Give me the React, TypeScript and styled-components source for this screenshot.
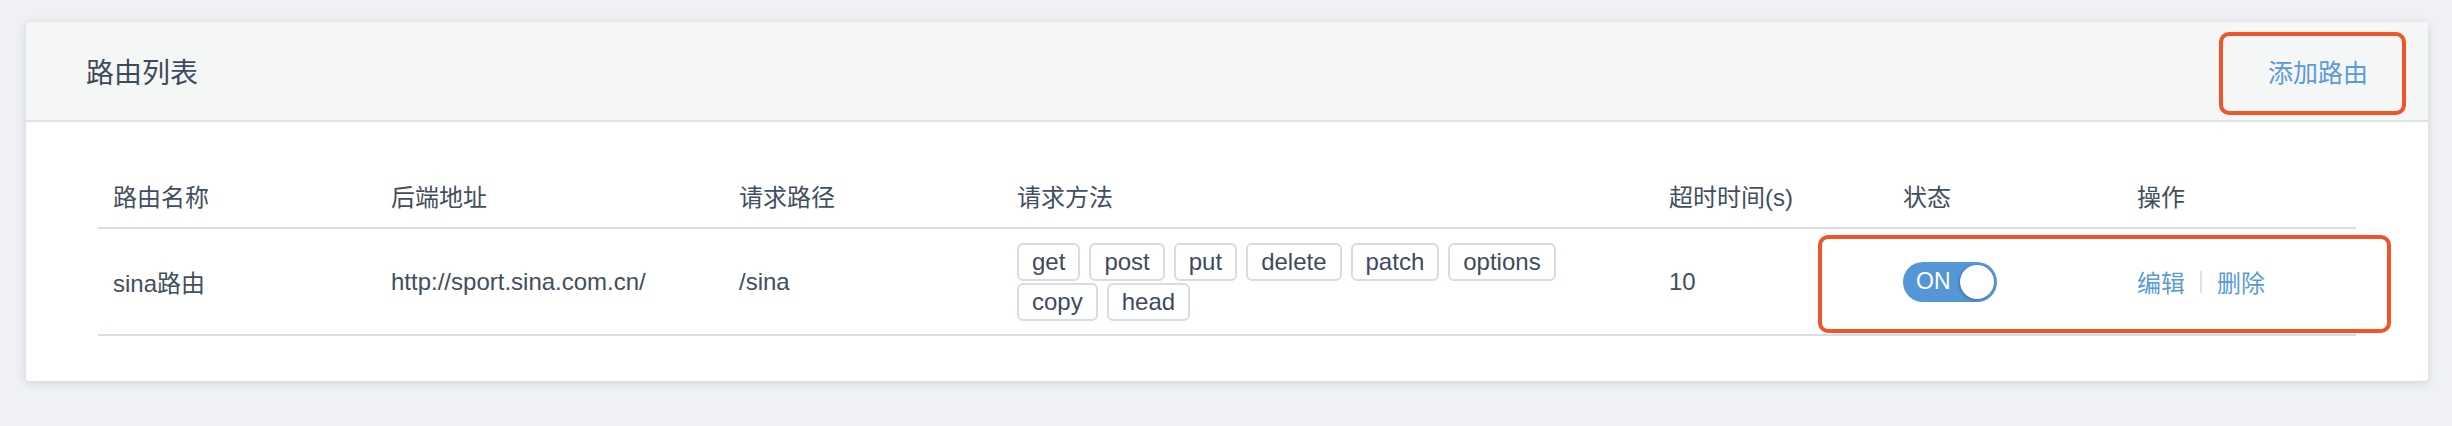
import React from 'react';
import styled, { createGlobalStyle } from 'styled-components';

const GlobalStyle = createGlobalStyle`
  html, body {
    margin: 0;
    padding: 0;
    background: #eff1f4;
  }
  body {
    font-family: "Liberation Sans", "Noto Sans CJK SC", sans-serif;
    color: #424e60;
  }
`;

const Page = styled.div`
  padding: 22px 24px 44px 26px;
`;

const Card = styled.section`
  position: relative;
  background: #fff;
  border-radius: 4px;
  box-shadow: 0 2px 10px rgba(40, 52, 72, 0.16);
`;

const CardHeader = styled.header`
  display: flex;
  align-items: center;
  justify-content: space-between;
  height: 100px;
  padding: 0 60px;
  box-sizing: border-box;
  background: #f5f7f7;
  border-bottom: 2px solid #dfe3e8;
  border-radius: 4px 4px 0 0;
`;

const Title = styled.h2`
  margin: 0;
  font-size: 28px;
  font-weight: 400;
  color: #3f4a5c;
`;

const LinkButton = styled.a`
  font-size: 25px;
  color: #5b9bd5;
  cursor: pointer;
  text-decoration: none;
`;

const CardBody = styled.div`
  padding: 41px 72px 45px;
`;

const Row = styled.div<{ $head?: boolean }>`
  display: grid;
  grid-template-columns: 278px 348px 278px 652px 234px 234px 1fr;
  align-items: center;
  min-height: ${({ $head }) => ($head ? '64px' : '105px')};
  border-bottom: 2px solid #d9dde6;
  font-size: 24px;
  color: #424e60;
`;

const Cell = styled.div`
  padding: 0 15px;
`;

const Tags = styled.div`
  display: flex;
  flex-wrap: wrap;
  gap: 2px 9px;
  max-width: 580px;
`;

const Tag = styled.span`
  display: inline-block;
  height: 38px;
  line-height: 34px;
  padding: 0 13px;
  box-sizing: border-box;
  border: 2px solid #d6dbe5;
  border-radius: 6px;
  font-size: 24px;
  color: #3f4a5c;
`;

const Switch = styled.span`
  position: relative;
  display: inline-flex;
  align-items: center;
  width: 94px;
  height: 40px;
  padding-left: 13px;
  box-sizing: border-box;
  border-radius: 20px;
  background: #5596d7;
  color: #fff;
  font-size: 23px;
  vertical-align: middle;
`;

const Knob = styled.span`
  position: absolute;
  right: 3px;
  top: 3px;
  width: 34px;
  height: 34px;
  border-radius: 50%;
  background: #fff;
  box-shadow: -1px 1px 3px rgba(0, 0, 0, 0.25);
`;

const Actions = styled.div`
  display: flex;
  align-items: center;
  gap: 15px;
`;

const ActionLink = styled.a`
  font-size: 24px;
  color: #5b9bd5;
  cursor: pointer;
`;

const Divider = styled.span`
  width: 2px;
  height: 22px;
  background: #dde3eb;
`;

const Highlight = styled.div<{ $top: number; $left: number; $w: number; $h: number }>`
  position: absolute;
  top: ${({ $top }) => $top}px;
  left: ${({ $left }) => $left}px;
  width: ${({ $w }) => $w}px;
  height: ${({ $h }) => $h}px;
  box-sizing: border-box;
  border: 4px solid #f0552a;
  border-radius: 10px;
  pointer-events: none;
`;

const columns = ['路由名称', '后端地址', '请求路径', '请求方法', '超时时间(s)', '状态', '操作'];
const methods = ['get', 'post', 'put', 'delete', 'patch', 'options', 'copy', 'head'];

const App: React.FC = () => {
  return (
    <>
      <GlobalStyle />
      <Page>
        <Card>
          <CardHeader>
            <Title>路由列表</Title>
            <LinkButton>添加路由</LinkButton>
          </CardHeader>
          <CardBody>
            <Row $head>
              {columns.map((c) => (
                <Cell key={c}>{c}</Cell>
              ))}
            </Row>
            <Row>
              <Cell>sina路由</Cell>
              <Cell>http://sport.sina.com.cn/</Cell>
              <Cell>/sina</Cell>
              <Cell>
                <Tags>
                  {methods.map((m) => (
                    <Tag key={m}>{m}</Tag>
                  ))}
                </Tags>
              </Cell>
              <Cell>10</Cell>
              <Cell>
                <Switch>
                  ON
                  <Knob />
                </Switch>
              </Cell>
              <Cell>
                <Actions>
                  <ActionLink>编辑</ActionLink>
                  <Divider />
                  <ActionLink>删除</ActionLink>
                </Actions>
              </Cell>
            </Row>
          </CardBody>
          <Highlight $top={10} $left={2193} $w={187} $h={83} />
          <Highlight $top={213} $left={1792} $w={573} $h={98} />
        </Card>
      </Page>
    </>
  );
};

export default App;
